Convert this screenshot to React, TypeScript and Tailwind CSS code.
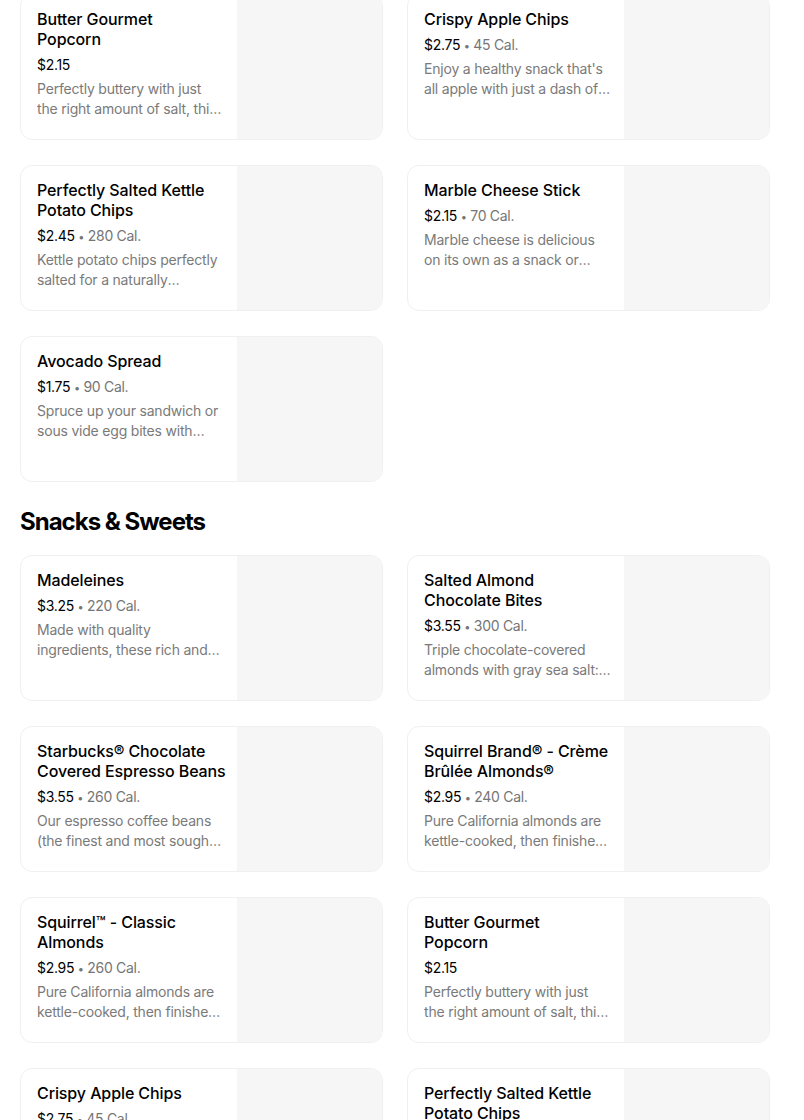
import React from "react";

type Item = {
  name: string;
  price: string;
  cal?: string;
  desc: string;
};

// names carry the line breaks the menu shows
const moreItems: Item[] = [
  {
    name: "Butter Gourmet\nPopcorn",
    price: "$2.15",
    desc: "Perfectly buttery with just the right amount of salt, this popcorn is a classic treat.",
  },
  {
    name: "Crispy Apple Chips",
    price: "$2.75",
    cal: "45 Cal.",
    desc: "Enjoy a healthy snack that's all apple with just a dash of cinnamon.",
  },
  {
    name: "Perfectly Salted Kettle\nPotato Chips",
    price: "$2.45",
    cal: "280 Cal.",
    desc: "Kettle potato chips perfectly salted for a naturally delicious crunch.",
  },
  {
    name: "Marble Cheese Stick",
    price: "$2.15",
    cal: "70 Cal.",
    desc: "Marble cheese is delicious on its own as a snack or paired with fruit.",
  },
  {
    name: "Avocado Spread",
    price: "$1.75",
    cal: "90 Cal.",
    desc: "Spruce up your sandwich or sous vide egg bites with creamy avocado.",
  },
];

const snacks: Item[] = [
  {
    name: "Madeleines",
    price: "$3.25",
    cal: "220 Cal.",
    desc: "Made with quality ingredients, these rich and buttery cakes are baked to perfection.",
  },
  {
    name: "Salted Almond\nChocolate Bites",
    price: "$3.55",
    cal: "300 Cal.",
    desc: "Triple chocolate-covered almonds with gray sea salt: dark, milk and white.",
  },
  {
    name: "Starbucks® Chocolate\nCovered Espresso Beans",
    price: "$3.55",
    cal: "260 Cal.",
    desc: "Our espresso coffee beans (the finest and most sought-after) covered in chocolate.",
  },
  {
    name: "Squirrel Brand® - Crème\nBrûlée Almonds®",
    price: "$2.95",
    cal: "240 Cal.",
    desc: "Pure California almonds are kettle-cooked, then finished with caramelized sugar.",
  },
  {
    name: "Squirrel™ - Classic\nAlmonds",
    price: "$2.95",
    cal: "260 Cal.",
    desc: "Pure California almonds are kettle-cooked, then finished with sea salt.",
  },
  {
    name: "Butter Gourmet\nPopcorn",
    price: "$2.15",
    desc: "Perfectly buttery with just the right amount of salt, this popcorn is a classic treat.",
  },
  {
    name: "Crispy Apple Chips",
    price: "$2.75",
    cal: "45 Cal.",
    desc: "Enjoy a healthy snack that's all apple with just a dash of cinnamon.",
  },
  {
    name: "Perfectly Salted Kettle\nPotato Chips",
    price: "$2.45",
    cal: "280 Cal.",
    desc: "Kettle potato chips perfectly salted for a naturally delicious crunch.",
  },
];

const ItemCard = ({ item }: { item: Item }) => (
  <div className="flex h-[146px] w-[363px] overflow-hidden rounded-xl border border-[#f0f0f0] bg-white">
    <div className="flex w-[216px] flex-col pl-[16px] pr-[8px] pt-[14px]">
      <div className="whitespace-pre-line text-[16px] font-medium leading-[20px] tracking-[-0.1px] text-black">
        {item.name}
      </div>
      <div className="mt-[6px] h-[20px] text-[14px] leading-[20px] tracking-[-0.3px] text-[#757575]">
        <span className="text-black">{item.price}</span>
        {item.cal && (
          <span>
            {" "}
            <span className="text-[11px] leading-none">•</span> {item.cal}
          </span>
        )}
      </div>
      <div className="mt-[4px] line-clamp-2 pr-[4px] text-[14px] leading-[20px] tracking-[-0.2px] text-[#7a7a7a]">
        {item.desc}
      </div>
    </div>
    <div className="flex-1 bg-[#f6f6f6]" />
  </div>
);

const Grid = ({ items }: { items: Item[] }) => (
  <div className="grid grid-cols-[363px_363px] gap-x-[24px] gap-y-[25px]">
    {items.map((item, i) => (
      <ItemCard key={item.name + i} item={item} />
    ))}
  </div>
);

export default function App() {
  return (
    <div
      className="min-h-[1120px] overflow-hidden bg-white px-[20px]"
      style={{ fontFamily: "Inter, 'Noto Sans', sans-serif" }}
    >
      <div className="mt-[-6px]">
        <Grid items={moreItems} />
      </div>
      <h2 className="mb-[17px] mt-[24px] text-[24px] font-bold leading-[32px] tracking-[-1px] text-black">
        Snacks &amp; Sweets
      </h2>
      <Grid items={snacks} />
    </div>
  );
}
